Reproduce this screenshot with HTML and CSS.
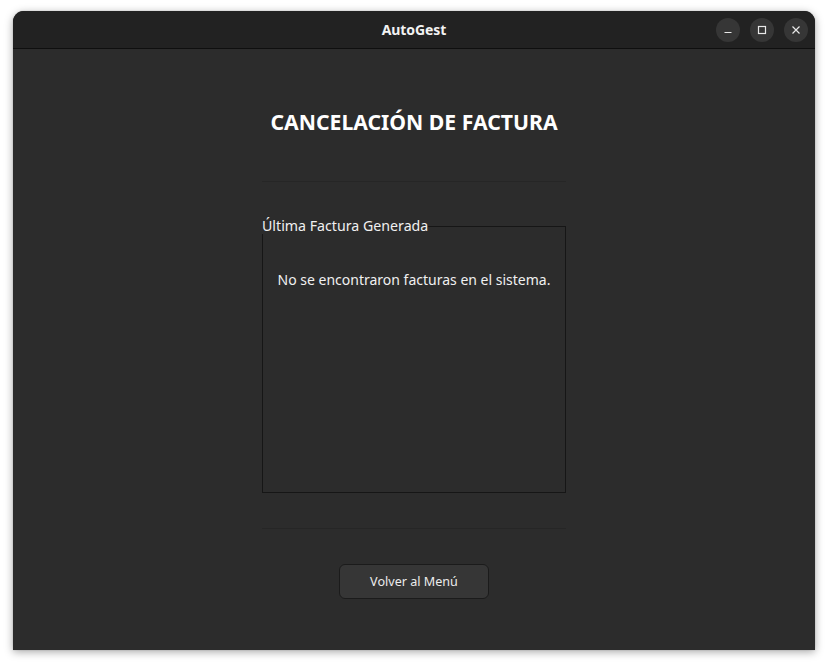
FILE: index.html
```html
<!DOCTYPE html>
<html lang="es">
<head>
<meta charset="utf-8">
<title>AutoGest</title>
<link rel="stylesheet" href="styles.css">
</head>
<body>
<div class="window">
  <header class="titlebar">
    <div class="title">AutoGest</div>
    <div class="controls">
      <button class="ctl" aria-label="Minimizar"><svg width="10" height="10" viewBox="0 0 10 10"><path d="M1.5 7.5h7" stroke="#e8e8e8" stroke-width="1.2"/></svg></button>
      <button class="ctl" aria-label="Maximizar"><svg width="10" height="10" viewBox="0 0 10 10"><rect x="1.5" y="1.5" width="7" height="7" fill="none" stroke="#e8e8e8" stroke-width="1.2"/></svg></button>
      <button class="ctl" aria-label="Cerrar"><svg width="10" height="10" viewBox="0 0 10 10"><path d="M1.5 1.5l7 7M8.5 1.5l-7 7" stroke="#e8e8e8" stroke-width="1.2"/></svg></button>
    </div>
  </header>
  <main class="content">
    <h1 class="heading">CANCELACIÓN DE FACTURA</h1>
    <div class="sep sep-top"></div>
    <fieldset class="group">
      <legend class="group-title">Última Factura Generada</legend>
      <p class="message">No se encontraron facturas en el sistema.</p>
    </fieldset>
    <div class="sep sep-bottom"></div>
    <button class="btn">Volver al Menú</button>
  </main>
</div>
</body>
</html>
```

FILE: styles.css
```css
* { box-sizing: border-box; }
html, body { margin: 0; padding: 0; }
body {
  background: #ffffff;
  width: 828px;
  height: 666px;
  overflow: hidden;
  font-family: "Noto Sans", "DejaVu Sans", sans-serif;
  color: #f0f0f0;
}
.window {
  margin: 11px 0 0 13px;
  width: 802px;
  height: 639px;
  background: #2c2c2c;
  border-radius: 11px 11px 0 0;
  box-shadow: 0 2px 8px rgba(0,0,0,0.35), 0 0 1px rgba(0,0,0,0.4);
  display: flex;
  flex-direction: column;
  overflow: hidden;
}
.titlebar {
  height: 38px;
  flex: none;
  background: #222222;
  border-bottom: 1px solid #0f0f0f;
  display: flex;
  align-items: center;
  justify-content: center;
  position: relative;
}
.title {
  font-weight: 700;
  font-size: 14px;
  color: #f2f2f2;
  letter-spacing: -0.1px;
}
.controls {
  position: absolute;
  right: 7px;
  top: 7px;
  display: flex;
  gap: 10px;
}
.ctl {
  width: 24px;
  height: 24px;
  border-radius: 50%;
  background: #363636;
  border: none;
  padding: 0;
  display: flex;
  align-items: center;
  justify-content: center;
}
.content {
  flex: 1;
  display: flex;
  flex-direction: column;
  align-items: center;
  padding-top: 61px;
}
.heading {
  margin: 0;
  font-size: 21.2px;
  line-height: 24px;
  font-weight: 700;
  color: #ffffff;
}
.sep {
  width: 304px;
  height: 1px;
  background: #262626;
}
.sep-top { margin-top: 47px; }
.group {
  width: 304px;
  height: 275px;
  margin: 36px 0 0 0;
  padding: 0;
  border: 1px solid #161616;
  min-width: 0;
}
.group-title {
  padding: 0;
  margin-left: -1px;
  font-size: 14.2px;
  line-height: 16px;
  color: #f0f0f0;
}
.message {
  margin: 37px 0 0 0;
  text-align: center;
  font-size: 14px;
  line-height: 18px;
  color: #f0f0f0;
}
.sep-bottom { margin-top: 35px; }
.btn {
  margin-top: 35px;
  width: 150px;
  height: 35px;
  border-radius: 6px;
  background: #363636;
  border: 1px solid #1b1b1b;
  color: #ececec;
  font-family: "Noto Sans", "DejaVu Sans", sans-serif;
  font-size: 12.6px;
}
```
